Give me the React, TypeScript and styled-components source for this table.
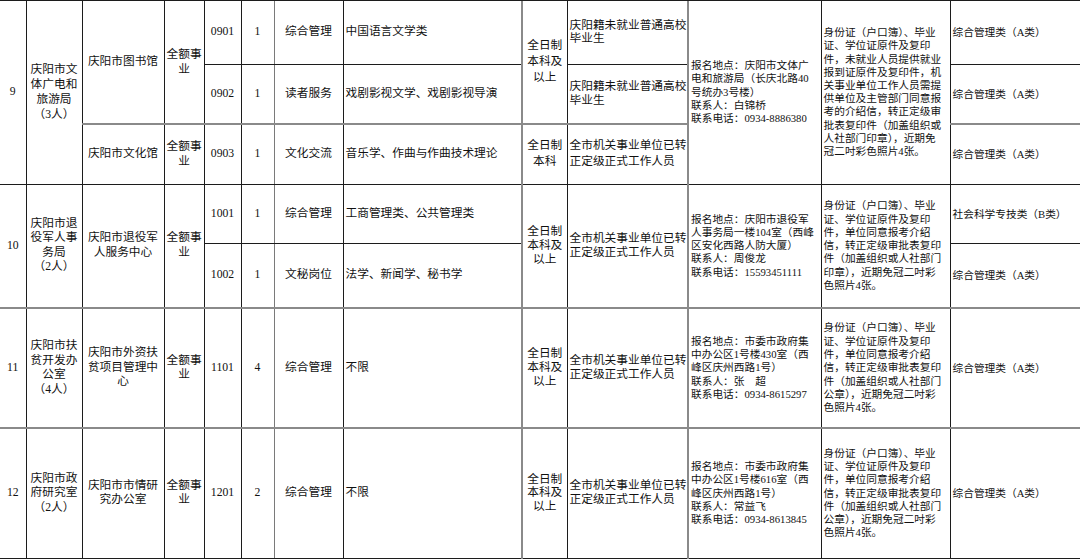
import styled, { createGlobalStyle } from 'styled-components';

const GlobalStyle = createGlobalStyle`
  body {
    margin: 0;
    background: #ffffff;
  }
`;

type Kind = 'mid' | 'left' | 'small';

interface CellData {
  c: number;
  rs?: number;
  t: string[];
  g?: boolean;
  lh?: number;
}

interface RowData {
  h: number;
  cells: CellData[];
}

// column widths, left to right
const widths = [26, 56, 82, 40, 37, 33, 69, 179, 45, 121, 133, 129, 130];

// how each column's text sits in its cell
const kinds: Kind[] = ['mid', 'mid', 'mid', 'mid', 'mid', 'mid', 'mid', 'left', 'mid', 'left', 'small', 'small', 'small'];

// right-hand rule of each column
const rightRules = ['dark', 'dark', 'dark', 'dark', 'dark', 'soft', 'dark', 'grey', 'dark', 'grey', 'dark', 'dark', 'none'];

const Page = styled.div`
  width: 1080px;
  height: 559px;
  overflow: hidden;
  background: #ffffff;
`;

const Table = styled.table`
  width: 1080px;
  border-collapse: collapse;
  table-layout: fixed;
  font-family: 'Liberation Serif', 'Noto Sans CJK SC', serif;
  color: #111111;
`;

const Col = styled.col<{ $w: number }>`
  width: ${(p) => p.$w}px;
`;

const Row = styled.tr<{ $h: number }>`
  height: ${(p) => p.$h}px;
`;

const Cell = styled.td<{ $kind: Kind; $right: string; $grey?: boolean; $lh: number }>`
  padding: 0 2px;
  vertical-align: middle;
  overflow: hidden;
  text-align: ${(p) => (p.$kind === 'mid' ? 'center' : 'left')};
  font-size: ${(p) => (p.$kind === 'small' ? '10.7px' : '11.7px')};
  line-height: ${(p) => p.$lh}px;
  border-top: none;
  border-left: none;
  border-bottom: ${(p) => (p.$grey ? '2px solid #8a8a8a' : '1px solid #1c1c1c')};
  border-right: ${(p) =>
    p.$right === 'none'
      ? 'none'
      : p.$right === 'grey'
        ? '2px solid #8a8a8a'
        : p.$right === 'soft'
          ? '1px solid #7a7a7a'
          : '1px solid #1c1c1c'};
`;

const TopRule = styled.tr`
  height: 0;
  & > td {
    padding: 0;
    border-top: 1px solid #1c1c1c;
  }
`;

const Line = styled.div`
  white-space: nowrap;
`;

const materials9 = [
  '身份证（户口簿）、毕业',
  '证、学位证原件及复印',
  '件，未就业人员提供就业',
  '报到证原件及复印件，机',
  '关事业单位工作人员需提',
  '供单位及主管部门同意报',
  '考的介绍信，转正定级审',
  '批表复印件（加盖组织或',
  '人社部门印章），近期免',
  '冠二吋彩色照片4张。',
];

const materials = (seal: string) => [
  '身份证（户口簿）、毕业',
  '证、学位证原件及复印',
  '件，单位同意报考介绍',
  '信，转正定级审批表复印',
  '件（加盖组织或人社部门',
  `${seal}），近期免冠二吋彩`,
  '色照片4张。',
];

const transferred = ['全市机关事业单位已转', '正定级正式工作人员'];
const degree = ['全日制', '本科及', '以上'];
const fullFunded = ['全额事', '业'];

const rows: RowData[] = [
  {
    h: 63,
    cells: [
      { c: 0, rs: 3, t: ['9'] },
      { c: 1, rs: 3, t: ['庆阳市文', '体广电和', '旅游局', '（3人）'], lh: 15 },
      { c: 2, rs: 2, t: ['庆阳市图书馆'], g: true },
      { c: 3, rs: 2, t: fullFunded, g: true, lh: 15 },
      { c: 4, t: ['0901'] },
      { c: 5, t: ['1'] },
      { c: 6, t: ['综合管理'] },
      { c: 7, t: ['中国语言文学类'] },
      { c: 8, rs: 2, t: degree, g: true, lh: 16 },
      { c: 9, t: ['庆阳籍未就业普通高校', '毕业生'], lh: 13.3 },
      {
        c: 10,
        rs: 3,
        t: ['报名地点：庆阳市文体广', '电和旅游局（长庆北路40', '号统办3号楼）', '联系人：白锦桥', '联系电话：0934-8886380'],
        lh: 13.3,
      },
      { c: 11, rs: 3, t: materials9, lh: 13.2 },
      { c: 12, t: ['综合管理类（A类）'] },
    ],
  },
  {
    h: 60,
    cells: [
      { c: 4, t: ['0902'], g: true },
      { c: 5, t: ['1'], g: true },
      { c: 6, t: ['读者服务'], g: true },
      { c: 7, t: ['戏剧影视文学、戏剧影视导演'], g: true },
      { c: 9, t: ['庆阳籍未就业普通高校', '毕业生'], g: true, lh: 13.3 },
      { c: 12, t: ['综合管理类（A类）'], g: true },
    ],
  },
  {
    h: 60,
    cells: [
      { c: 2, t: ['庆阳市文化馆'] },
      { c: 3, t: fullFunded, lh: 15 },
      { c: 4, t: ['0903'] },
      { c: 5, t: ['1'] },
      { c: 6, t: ['文化交流'] },
      { c: 7, t: ['音乐学、作曲与作曲技术理论'] },
      { c: 8, t: ['全日制', '本科'], lh: 16 },
      { c: 9, t: transferred, lh: 16 },
      { c: 12, t: ['综合管理类（A类）'] },
    ],
  },
  {
    h: 59,
    cells: [
      { c: 0, rs: 2, t: ['10'], g: true },
      { c: 1, rs: 2, t: ['庆阳市退', '役军人事', '务局', '（2人）'], g: true, lh: 14.5 },
      { c: 2, rs: 2, t: ['庆阳市退役军', '人服务中心'], g: true, lh: 14.5 },
      { c: 3, rs: 2, t: fullFunded, g: true, lh: 14.5 },
      { c: 4, t: ['1001'] },
      { c: 5, t: ['1'] },
      { c: 6, t: ['综合管理'] },
      { c: 7, t: ['工商管理类、公共管理类'] },
      { c: 8, rs: 2, t: degree, g: true, lh: 13.8 },
      { c: 9, rs: 2, t: transferred, g: true, lh: 13.8 },
      {
        c: 10,
        rs: 2,
        t: ['报名地点：庆阳市退役军', '人事务局一楼104室（西峰', '区安化西路人防大厦）', '联系人：周俊龙', '联系电话：15593451111'],
        g: true,
        lh: 13.3,
      },
      { c: 11, rs: 2, t: materials('印章'), g: true, lh: 13.3 },
      { c: 12, t: ['社会科学专技类（B类）'] },
    ],
  },
  {
    h: 65,
    cells: [
      { c: 4, t: ['1002'], g: true },
      { c: 5, t: ['1'], g: true },
      { c: 6, t: ['文秘岗位'], g: true },
      { c: 7, t: ['法学、新闻学、秘书学'], g: true },
      { c: 12, t: ['综合管理类（A类）'], g: true },
    ],
  },
  {
    h: 120,
    cells: [
      { c: 0, t: ['11'], g: true },
      { c: 1, t: ['庆阳市扶', '贫开发办', '公室', '（4人）'], g: true, lh: 14.5 },
      { c: 2, t: ['庆阳市外资扶', '贫项目管理中', '心'], g: true, lh: 14.5 },
      { c: 3, t: fullFunded, g: true, lh: 14.5 },
      { c: 4, t: ['1101'], g: true },
      { c: 5, t: ['4'], g: true },
      { c: 6, t: ['综合管理'], g: true },
      { c: 7, t: ['不限'], g: true },
      { c: 8, t: degree, g: true, lh: 13.8 },
      { c: 9, t: transferred, g: true, lh: 13.8 },
      {
        c: 10,
        t: ['报名地点：市委市政府集', '中办公区1号楼430室（西', '峰区庆州西路1号）', '联系人：张　超', '联系电话：0934-8615297'],
        g: true,
        lh: 13.3,
      },
      { c: 11, t: materials('公章'), g: true, lh: 13.3 },
      { c: 12, t: ['综合管理类（A类）'], g: true },
    ],
  },
  {
    h: 130,
    cells: [
      { c: 0, t: ['12'] },
      { c: 1, t: ['庆阳市政', '府研究室', '（2人）'], lh: 14.5 },
      { c: 2, t: ['庆阳市市情研', '究办公室'], lh: 14.5 },
      { c: 3, t: fullFunded, lh: 14.5 },
      { c: 4, t: ['1201'] },
      { c: 5, t: ['2'] },
      { c: 6, t: ['综合管理'] },
      { c: 7, t: ['不限'] },
      { c: 8, t: degree, lh: 13.8 },
      { c: 9, t: transferred, lh: 13.8 },
      {
        c: 10,
        t: ['报名地点：市委市政府集', '中办公区1号楼616室（西', '峰区庆州西路1号）', '联系人：常益飞', '联系电话：0934-8613845'],
        lh: 13.3,
      },
      { c: 11, t: materials('公章'), lh: 13.3 },
      { c: 12, t: ['综合管理类（A类）'] },
    ],
  },
];

export default function App() {
  return (
    <Page>
      <GlobalStyle />
      <Table>
        <colgroup>
          {widths.map((w, i) => (
            <Col key={i} $w={w} />
          ))}
        </colgroup>
        <tbody>
          <TopRule>
            {widths.map((_, i) => (
              <td key={i} />
            ))}
          </TopRule>
          {rows.map((row, ri) => (
            <Row key={ri} $h={row.h}>
              {row.cells.map((cell) => (
                <Cell
                  key={cell.c}
                  rowSpan={cell.rs}
                  $kind={kinds[cell.c]}
                  $right={rightRules[cell.c]}
                  $grey={cell.g}
                  $lh={cell.lh ?? 14}
                >
                  {cell.t.map((line, li) => (
                    <Line key={li}>{line}</Line>
                  ))}
                </Cell>
              ))}
            </Row>
          ))}
        </tbody>
      </Table>
    </Page>
  );
}
